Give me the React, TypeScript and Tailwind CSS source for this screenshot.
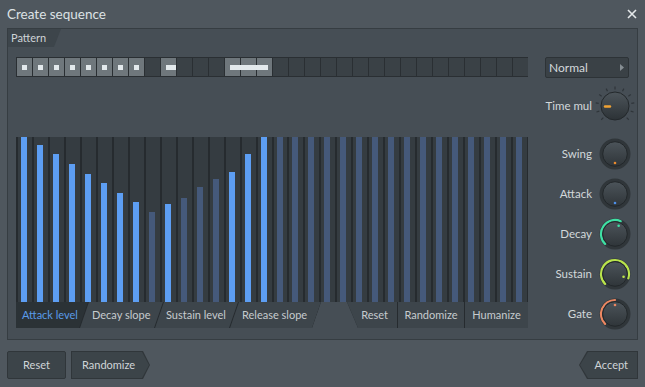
import React from "react";

const FONT = { fontFamily: "Lato, 'Noto Sans', sans-serif" };

const tops = [165, 157, 148, 138, 128, 119, 109, 100, 90, 98, 104, 115, 123, 130, 148, 165];
const heights = [...tops, ...Array(16).fill(165)];
const bright = new Set([0, 1, 2, 3, 4, 5, 6, 7, 9, 13, 14, 15]);

type Cell = "off" | "dot" | "barR" | "barL" | "barM" | "barE";
const cells: Cell[] = Array(32).fill("off");
for (let i = 0; i < 8; i++) cells[i] = "dot";
cells[9] = "barR";
cells[13] = "barL";
cells[14] = "barM";
cells[15] = "barE";

function pt(cx: number, deg: number, r: number) {
  const a = (deg * Math.PI) / 180;
  return [cx + r * Math.sin(a), cx - r * Math.cos(a)];
}

function Knob({ id, arcTo, arcColor, dot, dotColor }: { id: string; arcTo?: number; arcColor?: string; dot: number; dotColor: string }) {
  const c = 16;
  let arc = null;
  if (arcTo !== undefined && arcColor) {
    const [x1, y1] = pt(c, -135, 14);
    const [x2, y2] = pt(c, arcTo, 14);
    const large = arcTo + 135 > 180 ? 1 : 0;
    arc = <path d={`M${x1} ${y1} A14 14 0 ${large} 1 ${x2} ${y2}`} stroke={arcColor} strokeWidth={2.2} fill="none" strokeLinecap="round" />;
  }
  const [dx, dy] = pt(c, dot, 9);
  return (
    <svg width={32} height={32} viewBox="0 0 32 32">
      <defs>
        <linearGradient id={id} x1="0" y1="0" x2="0" y2="1">
          <stop offset="0" stopColor="#4c545a" />
          <stop offset="1" stopColor="#2f3539" />
        </linearGradient>
      </defs>
      <circle cx={c} cy={c} r={15.5} fill="#30363a" />
      {arc}
      <circle cx={c} cy={c} r={12.3} fill={`url(#${id})`} stroke="#22272a" strokeWidth={1} />
      <circle cx={dx} cy={dy} r={1.3} fill={dotColor} />
    </svg>
  );
}

function TimeKnob() {
  const c = 20;
  const ticks = [];
  for (let i = 0; i < 11; i++) {
    const a = -135 + i * 27;
    const [x1, y1] = pt(c, a, 16.5);
    const [x2, y2] = pt(c, a, 19.5);
    ticks.push(<line key={i} x1={x1} y1={y1} x2={x2} y2={y2} stroke="#2f353a" strokeWidth={1.2} />);
  }
  return (
    <svg width={40} height={40} viewBox="0 0 40 40">
      <defs>
        <linearGradient id="tk" x1="0" y1="0" x2="0" y2="1">
          <stop offset="0" stopColor="#4d555b" />
          <stop offset="1" stopColor="#2c3236" />
        </linearGradient>
      </defs>
      {ticks}
      <circle cx={c} cy={c} r={14} fill="url(#tk)" stroke="#23282b" strokeWidth={1} />
      <line x1={c - 10} y1={c + 0.5} x2={c - 5} y2={c + 0.5} stroke="#f0a234" strokeWidth={2.4} strokeLinecap="round" />
    </svg>
  );
}

function KnobRow({ label, children }: { label: string; children: React.ReactNode }) {
  return (
    <div className="flex h-[40px] items-center justify-end gap-[7px] pr-[6px]">
      <span className="text-[11.5px] text-[#d3d8db]">{label}</span>
      {children}
    </div>
  );
}

const tabText = "text-[#c6cbce] bg-[#3d454b]";

export default function App() {
  return (
    <div className="flex h-[387px] w-[645px] flex-col overflow-hidden bg-[#4f575e] select-none" style={FONT}>
      {/* title */}
      <div className="flex h-[28px] items-center justify-between bg-[#4f575e] pl-[7px] pr-[8px]">
        <span className="text-[13.5px] text-[#dde2e5]">Create sequence</span>
        <svg width="10" height="10" viewBox="0 0 10 10">
          <path d="M1 1 L9 9 M9 1 L1 9" stroke="#e4e8ea" strokeWidth="1.6" />
        </svg>
      </div>

      {/* panel */}
      <div className="mx-[7px] flex h-[312px] flex-col border border-[#363d42] bg-[#464e55]">
        <div className="flex h-[18px]">
          <div className="flex w-[53px] items-center bg-[#3d454b] pl-[3px] text-[11px] text-[#cfd4d7] [clip-path:polygon(0_0,100%_0,calc(100%-7px)_100%,0_100%)]">
            Pattern
          </div>
        </div>
        <div className="flex flex-1">
          {/* left column */}
          <div className="ml-[8px] flex w-[512px] flex-col">
            {/* pattern */}
            <div className="mt-[10px] flex h-[20px] bg-[#2a2f33] p-px">
              {cells.map((c, i) => (
                <div key={i} className={`mr-px flex h-[18px] w-[15px] shrink-0 items-center ${c === "off" ? "bg-[#3a4146]" : "bg-[#6f777c]"}`}>
                  {c === "dot" && <div className="ml-[5px] h-[5px] w-[5px] bg-[#e3e9ec]" />}
                  {c === "barR" && <div className="ml-[5px] h-[5px] w-[10px] bg-[#e3e9ec]" />}
                  {c === "barL" && <div className="ml-[5px] h-[5px] w-[11px] shrink-0 bg-[#e3e9ec]" />}
                  {c === "barM" && <div className="h-[5px] w-[16px] shrink-0 bg-[#e3e9ec]" />}
                  {c === "barE" && <div className="h-[5px] w-[11px] bg-[#e3e9ec]" />}
                </div>
              ))}
            </div>
            {/* bars */}
            <div className="mt-[60px] flex h-[165px] border-r border-[#262b2f]">
              {heights.map((h, i) => (
                <div key={i} className="flex h-full w-[16px] items-end border-l-2 border-[#262b2f] bg-[#353c41]">
                  <div
                    className={`ml-[3px] w-[6px] ${bright.has(i) ? "bg-[#5d9ef3]" : "bg-[#45597a]"}`}
                    style={{ height: h }}
                  />
                </div>
              ))}
            </div>
            {/* tabs */}
            <div className="flex h-[26px] items-stretch text-[11px]">
              <div className="flex w-[305px] bg-[#262b2f] [clip-path:polygon(0_0,100%_0,calc(100%-9px)_100%,0_100%)]">
                <div className="flex w-[72px] items-center pl-[6px] text-[#5a9be8] bg-[#2b3236] [clip-path:polygon(0_0,100%_0,calc(100%-9px)_100%,0_100%)]">
                  Attack level
                </div>
                <div className={`-ml-[8px] flex w-[83px] items-center pl-[12px] ${tabText} [clip-path:polygon(9px_0,100%_0,calc(100%-9px)_100%,0_100%)]`}>
                  Decay slope
                </div>
                <div className={`-ml-[8px] flex w-[83px] items-center pl-[11px] ${tabText} [clip-path:polygon(9px_0,100%_0,calc(100%-9px)_100%,0_100%)]`}>
                  Sustain level
                </div>
                <div className={`-ml-[8px] flex w-[91px] items-center pl-[12px] ${tabText} [clip-path:polygon(9px_0,100%_0,calc(100%-9px)_100%,0_100%)]`}>
                  Release slope
                </div>
              </div>
              <div className="w-[26px]" />
              <div className="flex flex-1 gap-px bg-[#262b2f] [clip-path:polygon(0_0,100%_0,100%_100%,11px_100%)]">
                <div className={`flex w-[50px] items-center justify-end pr-[9px] ${tabText}`}>Reset</div>
                <div className={`flex flex-1 items-center justify-center ${tabText}`}>Randomize</div>
                <div className={`flex w-[63px] items-center justify-center ${tabText}`}>Humanize</div>
              </div>
            </div>
          </div>
          {/* right column */}
          <div className="flex flex-1 flex-col">
            <div className="mt-[10px] ml-[17px] mr-[8px] flex h-[21px] items-center justify-between rounded-[2px] border border-[#2d3337] bg-[#3a4146] pl-[3px] pr-[4px] text-[12px] text-[#d3d8db]">
              <span>Normal</span>
              <svg width="4" height="7" viewBox="0 0 4 7">
                <path d="M0 0 L4 3.5 L0 7 Z" fill="#868e93" />
              </svg>
            </div>
            <div className="mt-[4px] flex h-[48px] items-center justify-end gap-[3px] pr-[2px]">
              <span className="text-[11.5px] text-[#d3d8db]">Time mul</span>
              <TimeKnob />
            </div>
            <div className="mt-[4px] flex flex-col">
              <KnobRow label="Swing">
                <Knob id="k1" dot={180} dotColor="#e88a2e" />
              </KnobRow>
              <KnobRow label="Attack">
                <Knob id="k2" dot={180} dotColor="#4d8fe8" />
              </KnobRow>
              <KnobRow label="Decay">
                <Knob id="k3" arcTo={24} arcColor="#3fe0a4" dot={24} dotColor="#3fe0a4" />
              </KnobRow>
              <KnobRow label="Sustain">
                <Knob id="k4" arcTo={108} arcColor="#b9e34c" dot={108} dotColor="#b9e34c" />
              </KnobRow>
              <KnobRow label="Gate">
                <Knob id="k5" arcTo={0} arcColor="#ec8762" dot={0} dotColor="#ec8762" />
              </KnobRow>
            </div>
          </div>
        </div>
      </div>

      {/* bottom */}
      <div className="flex flex-1 items-start justify-between px-[7px] pt-[11px] text-[11px] text-[#d0d5d8]">
        <div className="flex gap-[5px]">
          <div className="flex h-[28px] w-[59px] items-center justify-center rounded-[2px] border border-[#30363a] bg-[#3c4449]">Reset</div>
          <div className="h-[28px] w-[79px] bg-[#30363a] p-px [clip-path:polygon(0_0,calc(100%-7px)_0,100%_50%,calc(100%-7px)_100%,0_100%)]">
            <div className="flex h-full w-full items-center pl-[10px] bg-[#3c4449] [clip-path:polygon(0_0,calc(100%-7px)_0,100%_50%,calc(100%-7px)_100%,0_100%)]">
              Randomize
            </div>
          </div>
        </div>
        <div className="h-[28px] w-[59px] bg-[#30363a] p-px [clip-path:polygon(8px_0,100%_0,100%_100%,8px_100%,0_50%)]">
          <div className="flex h-full w-full items-center justify-end pr-[9px] bg-[#3c4449] [clip-path:polygon(8px_0,100%_0,100%_100%,8px_100%,0_50%)]">
            Accept
          </div>
        </div>
      </div>
    </div>
  );
}
